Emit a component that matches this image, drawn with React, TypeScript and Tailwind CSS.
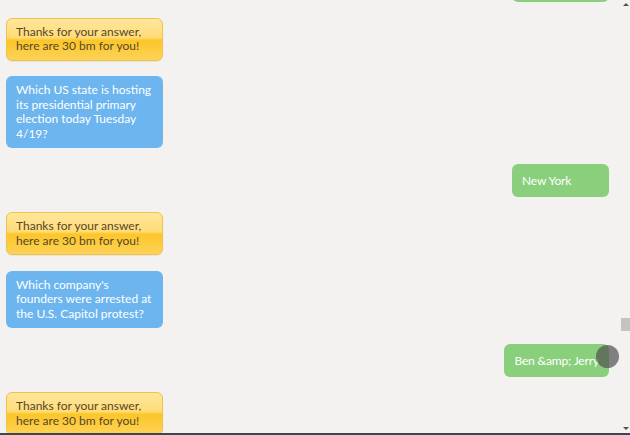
import React from 'react';

type Msg = { from: 'bot' | 'question' | 'me'; text: string };

const messages: Msg[] = [
  { from: 'me', text: 'Washington' },
  { from: 'bot', text: 'Thanks for your answer, here are 30 bm for you!' },
  { from: 'question', text: 'Which US state is hosting its presidential primary election today Tuesday 4/19?' },
  { from: 'me', text: 'New York' },
  { from: 'bot', text: 'Thanks for your answer, here are 30 bm for you!' },
  { from: 'question', text: "Which company's founders were arrested at the U.S. Capitol protest?" },
  { from: 'me', text: 'Ben &amp; Jerry' },
  { from: 'bot', text: 'Thanks for your answer, here are 30 bm for you!' },
];

// how far down the conversation is scrolled (0..1)
const scrollRatio = 0.74;

const Bubble: React.FC<{ msg: Msg; touched?: boolean }> = ({ msg, touched }) => {
  if (msg.from === 'bot') {
    return (
      <div className="self-start w-[157px] rounded-[6px] border border-[#efc24a] bg-[linear-gradient(180deg,#ffe69c_0%,#ffdc78_45%,#fcc628_52%,#fdd257_100%)] px-[9px] py-[6px] text-[12px] leading-[14.5px] text-[#574729] shadow-[0_1px_1px_rgba(0,0,0,0.06)]">
        {msg.text}
      </div>
    );
  }
  if (msg.from === 'question') {
    return (
      <div className="self-start w-[157px] rounded-[6px] bg-[#6cb5ef] px-[10px] py-[7px] text-[12px] leading-[14.5px] text-white">
        {msg.text}
      </div>
    );
  }
  return (
    <div className="relative self-end min-w-[97px] rounded-[6px] bg-[#89cf7c] px-[10px] py-[9px] text-[12px] leading-[15px] tracking-[-0.15px] text-white">
      {msg.text}
      {/* touch indicator */}
      {touched && (
        <span className="absolute -right-[10px] top-[1px] h-[23px] w-[23px] rounded-full bg-[#505050]/70" />
      )}
    </div>
  );
};

export default function App() {
  return (
    <div className="flex h-[435px] w-[630px] flex-col overflow-hidden bg-[#f3f2f1] font-['Lato','Open_Sans',sans-serif]">
      <div className="flex min-h-0 flex-1">
        <div className="flex-1 overflow-hidden">
          <div className="mt-[-31px] flex flex-col gap-[15.5px] pl-[6px] pr-[12px]">
            {messages.map((m, i) => (
              <Bubble key={i} msg={m} touched={i === 6} />
            ))}
          </div>
        </div>

        {/* scrollbar */}
        <div className="flex w-[9px] flex-col items-center py-[3px]">
          <div className="h-0 w-0 border-x-[3px] border-b-[3px] border-x-transparent border-b-[#505050]" />
          <div className="relative flex-1 self-stretch">
            <div className="absolute left-0 h-[13px] w-[9px] bg-[#c3c3c3]" style={{ top: `${scrollRatio * 100}%` }} />
          </div>
          <div className="h-0 w-0 border-x-[3px] border-t-[3px] border-x-transparent border-t-[#505050]" />
        </div>
      </div>

      <div className="h-[2px] bg-[#3b4652]" />
    </div>
  );
}
